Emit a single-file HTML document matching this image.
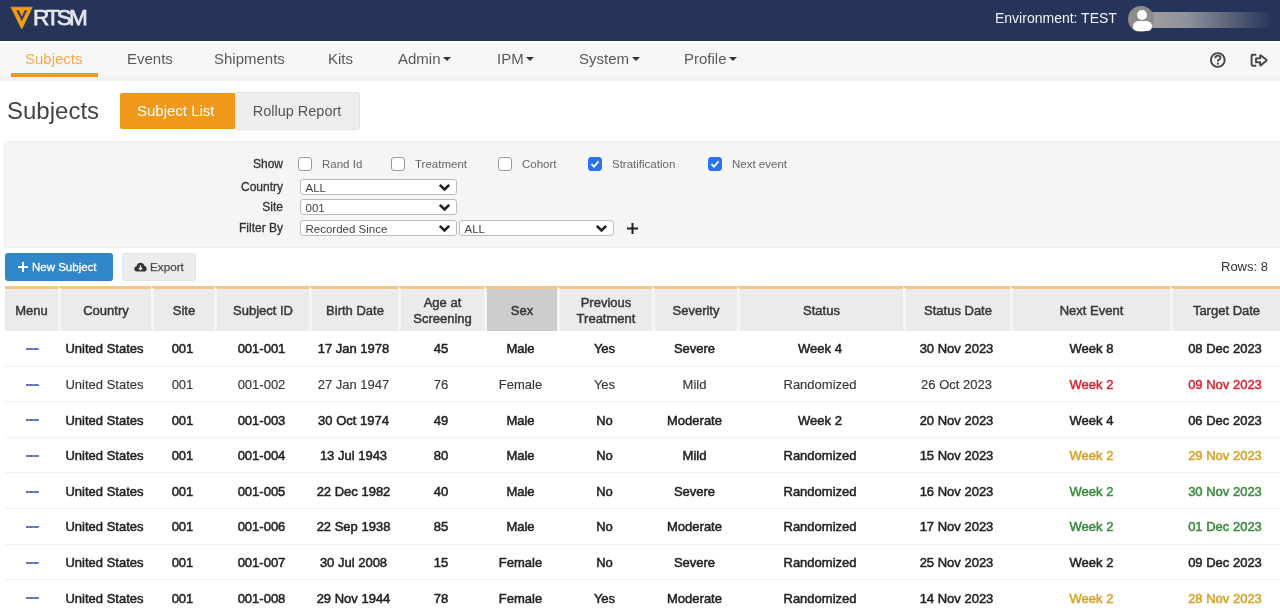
<!DOCTYPE html>
<html><head><meta charset="utf-8">
<style>
*{box-sizing:border-box;margin:0;padding:0}
html,body{width:1280px;height:615px;overflow:hidden;background:#fff;font-family:"Liberation Sans",sans-serif;color:#333}
.abs{position:absolute;white-space:nowrap}
#hdr{position:absolute;left:0;top:0;width:1280px;height:41px;background:#26345a}
#hdrline{position:absolute;left:0;top:41px;width:1280px;height:2px;background:#fff}
#nav{position:absolute;left:0;top:43px;width:1280px;height:38px;background:#f7f7f7}
.nv{position:absolute;top:49.5px;font-size:15px;line-height:17px;color:#5a5a5a}
.caret{display:inline-block;width:0;height:0;border-left:4px solid transparent;border-right:4px solid transparent;border-top:4.5px solid #333;vertical-align:middle;margin-left:2.5px;position:relative;top:-1px}
#title{position:absolute;left:7px;top:97px;font-size:24px;line-height:28px;color:#444}
.tab{position:absolute;top:93px;height:36px;font-size:15px;line-height:36px;text-align:center}
#panel{position:absolute;left:4px;top:141px;width:1277px;height:107px;background:#f5f5f5;border:1px solid #eeeeee;border-radius:2px}
.lbl{position:absolute;font-size:12px;line-height:13px;color:#333;-webkit-text-stroke-width:0.3px;text-align:right;width:80px;left:203px}
.cb{position:absolute;width:14px;height:14px;border:1px solid #9a9a9a;border-radius:3px;background:#fff}
.cbon{background:#2a72f2;border-color:#2a72f2}
.cbt{position:absolute;font-size:11.5px;line-height:13px;color:#666}
.sel{position:absolute;height:16px;border:1.5px solid #bdbdbd;border-radius:3px;background:#fff;font-size:11.5px;line-height:13px;padding:1.5px 0 0 4.5px;color:#444}
.chev{position:absolute;right:5.5px;top:2.5px}
table{position:absolute;left:5px;top:286px;border-collapse:separate;border-spacing:0;table-layout:fixed;width:1275px}
th{background:#ebebeb;border-top:3px solid #f5c585;border-left:3px solid #f5f5f5;height:45px;padding:1px 0 0 0;font-size:13px;line-height:16px;font-weight:normal;color:#363636;-webkit-text-stroke-width:0.45px;text-align:center;vertical-align:middle}
th:first-child{border-left:none}
td{height:35.62px;padding:1px 0 0 0;border-bottom:1px solid #f0f0f0;font-size:13px;text-align:center;vertical-align:middle;color:#222;font-weight:normal;-webkit-text-stroke-width:0.5px;white-space:nowrap}
tr.n td{font-weight:normal;color:#383838;-webkit-text-stroke-width:0.15px}
.dash{display:inline-block;width:13px;height:2px;background:repeating-linear-gradient(to right,#8a5aa6 0,#8a5aa6 2px,#5f86d0 2px,#5f86d0 4.3px);vertical-align:middle;position:relative;left:1px;top:-0.75px}
.red{color:#d8232e !important;-webkit-text-stroke-width:0.45px !important}
td:nth-child(12){padding-left:3px}
.gold{color:#d6a224 !important}
.green{color:#3a8a3e !important}
body{filter:blur(0.4px)}
</style></head><body>
<div id="hdr"></div>
<div id="hdrline"></div>
<svg class="abs" style="left:0;top:0" width="40" height="41" viewBox="0 0 40 41">
  <polygon points="11,7.2 32.2,7.2 21.8,29" fill="#f39c12" stroke="#f39c12" stroke-width="0.8" stroke-linejoin="round"/>
  <polygon points="16.3,10.2 18.8,10.2 21.8,16.6 24.8,10.2 27.3,10.2 21.8,21.2" fill="#33405e"/>
  
</svg>
<div class="abs" style="left:33px;top:5px;font-size:22.5px;line-height:25px;font-weight:normal;-webkit-text-stroke-width:0.75px;letter-spacing:-2.9px;color:#e4e6ee">RTSM</div>
<div class="abs" style="left:995px;top:10px;font-size:14px;line-height:17px;color:#f0f2f8">Environment: TEST</div>
<div class="abs" style="left:1148px;top:11.5px;width:132px;height:16.5px;background:linear-gradient(to right,#a0a0a0 0%,#8e909a 30%,#26345a 95%)"></div>
<div class="abs" style="left:1128px;top:6px;width:25.5px;height:26px;border-radius:50%;background:#8c8c8c">
  <div style="position:absolute;left:8.6px;top:3.6px;width:10.8px;height:10.8px;border-radius:50%;background:#fff"></div>
  <div style="position:absolute;left:4.6px;top:15px;width:19px;height:10px;border-radius:6px 6px 5px 5px;background:#fff"></div>
</div>

<div id="nav"></div>
<div class="abs" style="left:0;top:77px;width:1280px;height:4px;background:#f1f1f1"></div>
<div class="abs" style="left:11px;top:73px;width:87px;height:4px;background:#f0981a"></div>
<div class="nv" style="left:25px;color:#f3a94a">Subjects</div>
<div class="nv" style="left:127px">Events</div>
<div class="nv" style="left:214px">Shipments</div>
<div class="nv" style="left:328px">Kits</div>
<div class="nv" style="left:398px">Admin<span class="caret"></span></div>
<div class="nv" style="left:497px">IPM<span class="caret"></span></div>
<div class="nv" style="left:579px">System<span class="caret"></span></div>
<div class="nv" style="left:684px">Profile<span class="caret"></span></div>
<svg class="abs" style="left:1208px;top:50px" width="20" height="20" viewBox="0 0 20 20">
  <circle cx="9.8" cy="10" r="6.9" fill="none" stroke="#444" stroke-width="1.9"/>
  <path d="M7.3 8.2 Q7.3 5.6 9.9 5.6 Q12.4 5.6 12.4 7.8 Q12.4 9.2 10.6 9.9 Q9.9 10.3 9.9 11.4" fill="none" stroke="#444" stroke-width="1.9"/>
  <circle cx="9.9" cy="13.7" r="1.1" fill="#444"/>
</svg>
<svg class="abs" style="left:1248px;top:50px" width="22" height="20" viewBox="0 0 22 20">
  <path d="M7.5 4.8 H4.8 Q3.6 4.8 3.6 6 V14.6 Q3.6 15.8 4.8 15.8 H7.5" fill="none" stroke="#444" stroke-width="1.9" stroke-linecap="round"/>
  <path d="M8 8.4 H12.2 V5.6 Q12.2 4.8 12.9 5.4 L18.4 9.8 Q19 10.3 18.4 10.8 L12.9 15.2 Q12.2 15.8 12.2 15 V12.2 H8 Z" fill="none" stroke="#444" stroke-width="1.9" stroke-linejoin="round"/>
</svg>

<div id="title">Subjects</div>
<div class="tab" style="left:235px;top:92px;width:125px;height:38px;background:#eeeeee;border:1px solid #e4e4e4;border-radius:0 3px 3px 0"></div>
<div class="tab" style="left:120px;top:93px;width:114.5px;height:35.5px;line-height:35.5px;padding-right:3px;background:#f0981a;color:#fff;border-radius:2px 0 0 2px">Subject List</div>
<div class="tab" style="left:234px;top:93px;width:126px;height:36px;color:#555;font-size:14.5px">Rollup Report</div>

<div id="panel"></div>
<div class="lbl" style="top:158px">Show</div>
<div class="lbl" style="top:181px">Country</div>
<div class="lbl" style="top:201px">Site</div>
<div class="lbl" style="top:222px">Filter By</div>
<div class="cb" style="left:298px;top:157px"></div><div class="cbt" style="left:322px;top:158px">Rand Id</div>
<div class="cb" style="left:391px;top:157px"></div><div class="cbt" style="left:415px;top:158px">Treatment</div>
<div class="cb" style="left:498px;top:157px"></div><div class="cbt" style="left:522px;top:158px">Cohort</div>
<div class="cb cbon" style="left:588px;top:157px"><svg width="12" height="12" viewBox="0 0 12 12" style="position:absolute;left:0;top:0"><path d="M2.5 6.2 L5 8.6 L9.6 3.4" fill="none" stroke="#fff" stroke-width="1.8"/></svg></div><div class="cbt" style="left:612px;top:158px">Stratification</div>
<div class="cb cbon" style="left:708px;top:157px"><svg width="12" height="12" viewBox="0 0 12 12" style="position:absolute;left:0;top:0"><path d="M2.5 6.2 L5 8.6 L9.6 3.4" fill="none" stroke="#fff" stroke-width="1.8"/></svg></div><div class="cbt" style="left:732px;top:158px">Next event</div>
<div class="sel" style="left:300px;top:179px;width:157px">ALL<svg class="chev" width="13" height="9" viewBox="0 0 13 9"><path d="M1.8 1.8 L6.5 6.5 L11.2 1.8" fill="none" stroke="#222" stroke-width="2.6"/></svg></div>
<div class="sel" style="left:300px;top:199px;width:157px">001<svg class="chev" width="13" height="9" viewBox="0 0 13 9"><path d="M1.8 1.8 L6.5 6.5 L11.2 1.8" fill="none" stroke="#222" stroke-width="2.6"/></svg></div>
<div class="sel" style="left:300px;top:220px;width:157px">Recorded Since<svg class="chev" width="13" height="9" viewBox="0 0 13 9"><path d="M1.8 1.8 L6.5 6.5 L11.2 1.8" fill="none" stroke="#222" stroke-width="2.6"/></svg></div>
<div class="sel" style="left:459px;top:220px;width:155px">ALL<svg class="chev" width="13" height="9" viewBox="0 0 13 9"><path d="M1.8 1.8 L6.5 6.5 L11.2 1.8" fill="none" stroke="#222" stroke-width="2.6"/></svg></div>
<svg class="abs" style="left:626px;top:222px" width="13" height="13" viewBox="0 0 13 13"><path d="M6.5 1 V12 M1 6.5 H12" stroke="#222" stroke-width="2"/></svg>

<div class="abs" style="left:5px;top:253px;width:108px;height:28px;background:#2f86c8;border-radius:3px"></div>
<svg class="abs" style="left:18px;top:262px" width="10" height="10" viewBox="0 0 10 10"><path d="M5 0 V10 M0 5 H10" stroke="#fff" stroke-width="2"/></svg>
<div class="abs" style="left:32px;top:260px;font-size:11.5px;line-height:14px;color:#fff;-webkit-text-stroke-width:0.3px">New Subject</div>
<div class="abs" style="left:122px;top:253px;width:74px;height:28px;background:#ececec;border:1px solid #e2e2e2;border-radius:3px"></div>
<svg class="abs" style="left:134px;top:262px" width="13" height="10" viewBox="0 0 13 10"><path d="M3 9.5 Q0.3 9.5 0.3 6.8 Q0.3 4.4 2.6 4.2 Q3.3 0.8 6.5 0.8 Q9.6 0.8 10.3 3.8 Q12.7 4.1 12.7 6.7 Q12.7 9.5 10 9.5 Z" fill="#333"/><path d="M6.5 3.5 V7.5 M4.7 5.8 L6.5 7.6 L8.3 5.8" stroke="#fff" stroke-width="1.2" fill="none"/></svg>
<div class="abs" style="left:150px;top:260px;font-size:11.7px;line-height:14px;color:#4a4a4a;-webkit-text-stroke-width:0.25px">Export</div>
<div class="abs" style="left:1221px;top:260px;font-size:13px;line-height:14px;color:#333">Rows: 8</div>

<table>
<colgroup>
<col style="width:53px"><col style="width:93px"><col style="width:63px"><col style="width:95px"><col style="width:89px"><col style="width:86px"><col style="width:73px"><col style="width:95px"><col style="width:85px"><col style="width:166px"><col style="width:107px"><col style="width:160px"><col style="width:110px">
</colgroup>
<tr><th>Menu</th><th>Country</th><th>Site</th><th>Subject ID</th><th>Birth Date</th><th>Age at<br>Screening</th><th style="background:#cccccc">Sex</th><th>Previous<br>Treatment</th><th>Severity</th><th>Status</th><th>Status Date</th><th>Next Event</th><th>Target Date</th></tr>
<tr><td><span class="dash"></span></td><td>United States</td><td>001</td><td>001-001</td><td>17 Jan 1978</td><td>45</td><td>Male</td><td>Yes</td><td>Severe</td><td>Week 4</td><td>30 Nov 2023</td><td>Week 8</td><td>08 Dec 2023</td></tr>
<tr class="n"><td><span class="dash"></span></td><td>United States</td><td>001</td><td>001-002</td><td>27 Jan 1947</td><td>76</td><td>Female</td><td>Yes</td><td>Mild</td><td>Randomized</td><td>26 Oct 2023</td><td class="red">Week 2</td><td class="red">09 Nov 2023</td></tr>
<tr><td><span class="dash"></span></td><td>United States</td><td>001</td><td>001-003</td><td>30 Oct 1974</td><td>49</td><td>Male</td><td>No</td><td>Moderate</td><td>Week 2</td><td>20 Nov 2023</td><td>Week 4</td><td>06 Dec 2023</td></tr>
<tr><td><span class="dash"></span></td><td>United States</td><td>001</td><td>001-004</td><td>13 Jul 1943</td><td>80</td><td>Male</td><td>No</td><td>Mild</td><td>Randomized</td><td>15 Nov 2023</td><td class="gold">Week 2</td><td class="gold">29 Nov 2023</td></tr>
<tr><td><span class="dash"></span></td><td>United States</td><td>001</td><td>001-005</td><td>22 Dec 1982</td><td>40</td><td>Male</td><td>No</td><td>Severe</td><td>Randomized</td><td>16 Nov 2023</td><td class="green">Week 2</td><td class="green">30 Nov 2023</td></tr>
<tr><td><span class="dash"></span></td><td>United States</td><td>001</td><td>001-006</td><td>22 Sep 1938</td><td>85</td><td>Male</td><td>No</td><td>Moderate</td><td>Randomized</td><td>17 Nov 2023</td><td class="green">Week 2</td><td class="green">01 Dec 2023</td></tr>
<tr><td><span class="dash"></span></td><td>United States</td><td>001</td><td>001-007</td><td>30 Jul 2008</td><td>15</td><td>Female</td><td>No</td><td>Severe</td><td>Randomized</td><td>25 Nov 2023</td><td>Week 2</td><td>09 Dec 2023</td></tr>
<tr><td><span class="dash"></span></td><td>United States</td><td>001</td><td>001-008</td><td>29 Nov 1944</td><td>78</td><td>Female</td><td>Yes</td><td>Moderate</td><td>Randomized</td><td>14 Nov 2023</td><td class="gold">Week 2</td><td class="gold">28 Nov 2023</td></tr>
</table>
</body></html>
